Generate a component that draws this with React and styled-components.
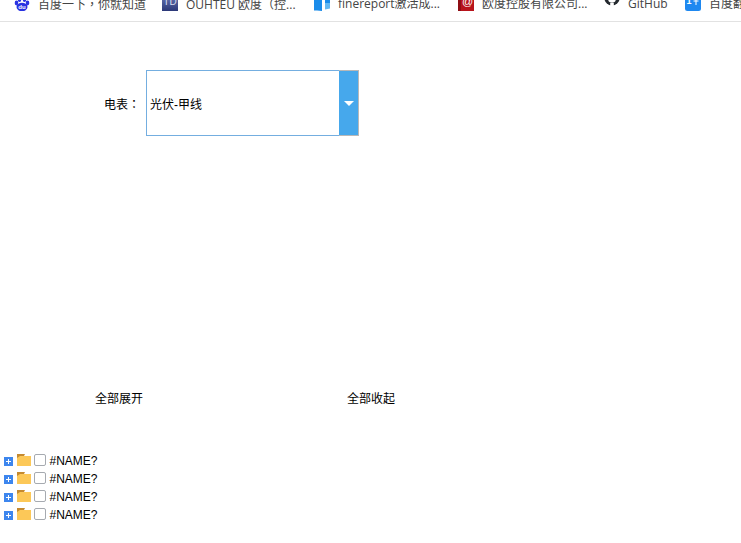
import React from "react";
import styled, { createGlobalStyle } from "styled-components";

const Global = createGlobalStyle`
  html, body { margin: 0; padding: 0; background: #fff; }
  body { width: 741px; height: 543px; overflow: hidden; font-family: "Liberation Sans", "Noto Sans CJK SC", sans-serif; color: #000; }
`;
const Page = styled.div`display: flex; flex-direction: column; width: 741px; height: 543px; overflow: hidden;`;
const BookmarkBar = styled.nav`
  display: flex; align-items: flex-end; flex: none; box-sizing: border-box;
  height: 22px; padding: 0 0 10px 14px; border-bottom: 1px solid #e2e2e2;
  overflow: hidden; white-space: nowrap;
`;
const Bookmark = styled.div`
  display: flex; align-items: center; flex: none; width: ${p => p.$w}px; height: 16px; gap: 8px;
`;
const BookmarkText = styled.span`
  margin-top: 2px; font-size: 12px; line-height: 16px; color: #444;
  font-family: "Open Sans", "Noto Sans CJK SC", sans-serif;
`;
const Fav = styled.svg`flex: none; width: 16px; height: 16px;`;
const Punct = styled.span`font-family: "Noto Sans CJK TC", sans-serif;`;
const Form = styled.div`
  display: flex; align-items: center; flex: none; margin: 48px 0 0 104px; height: 66px;
`;
const Label = styled.span`font-size: 12px; width: 42px; flex: none;`;
const Select = styled.div`display: flex; width: 213px; height: 66px;`;
const Value = styled.div`
  flex: 1; box-sizing: border-box; display: flex; align-items: center; padding-left: 3px; font-size: 12px;
  border: 1px solid #74aee0; border-right: 0;
`;
const Arrow = styled.div`
  box-sizing: border-box; flex: none; width: 20px; background: #46a8ec; display: flex; align-items: center; justify-content: center;
  border: 1px solid #b8b8b8; border-left: 0;
  &::after { content: ""; border-left: 5px solid transparent; border-right: 5px solid transparent; border-top: 5px solid #fff; }
`;
const Actions = styled.div`
  display: flex; flex: none; margin: 255px 0 0 95px; font-size: 12px; line-height: 16px;
`;
const Action = styled.span`width: 252px; flex: none;`;
const Tree = styled.ul`
  list-style: none; margin: 45px 0 0 4px; padding: 0; display: flex; flex-direction: column;
`;
const Row = styled.li`
  display: flex; align-items: flex-start; height: 18px; line-height: 18px; font-size: 12px;
`;
const Plus = styled.span`
  position: relative; width: 9px; height: 9px; margin-top: 5px; background: #3d86ee; flex: none;
  &::before { content: ""; position: absolute; left: 2px; top: 4px; width: 5px; height: 1px; background: #fff; }
  &::after { content: ""; position: absolute; left: 4px; top: 2px; width: 1px; height: 5px; background: #fff; }
`;
const Folder = styled.svg`flex: none; width: 14px; height: 12px; margin: 2px 0 0 4px;`;
const Check = styled.span`
  box-sizing: border-box; flex: none; width: 12px; height: 12px; margin: 2px 3px 0 3px;
  background: #fff; border: 1px solid #a6aab0; border-radius: 2px;
`;
const NodeName = styled.span`margin-left: 0.5px;`;
const IconLabel = styled.text`
  font-family: "Liberation Sans", sans-serif; font-weight: ${p => p.$bold ? 700 : 400};
`;

const favs = [
  { w: 148, label: <>百度一下<Punct>，</Punct>你就知道</>, icon: (
    <>
      <ellipse cx="8" cy="12" rx="5.5" ry="4.2" fill="#2932e1" />
      <ellipse cx="2.5" cy="8" rx="1.8" ry="2.4" fill="#2932e1" />
      <ellipse cx="13.5" cy="8" rx="1.8" ry="2.4" fill="#2932e1" />
      <ellipse cx="5.5" cy="4.5" rx="1.8" ry="2.4" fill="#2932e1" />
      <ellipse cx="10.5" cy="4.5" rx="1.8" ry="2.4" fill="#2932e1" />
      <IconLabel x="8" y="14" fontSize="6" textAnchor="middle" fill="#fff" $bold>du</IconLabel>
    </>
  ) },
  { w: 152, label: <>OUHTEU 欧度<Punct>（</Punct>控...</>, icon: (
    <>
      <defs>
        <linearGradient id="td" x1="0" y1="0" x2="0" y2="1">
          <stop offset="0" stopColor="#6a78b4" />
          <stop offset="1" stopColor="#2b3878" />
        </linearGradient>
      </defs>
      <rect x="0" y="0" width="16" height="16" fill="url(#td)" />
      <IconLabel x="8" y="10" fontSize="10" textAnchor="middle" fill="#d8def0">TD</IconLabel>
    </>
  ) },
  { w: 144, label: "finereport激活成...", icon: (
    <>
      <path d="M0 0h16v8H11V8H8V16L3 15.5H0z" fill="#1a8cea" />
      <path d="M8 8h3v8H8z" fill="#fff" />
      <path d="M11 8h5v5.5l-5 1z" fill="#63b8f2" />
      <path d="M8 5h3v3H8z" fill="#fff" />
    </>
  ) },
  { w: 146, label: "欧度控股有限公司...", icon: (
    <>
      <rect x="0" y="0" width="16" height="16" fill="#b8141c" />
      <rect x="0" y="0" width="3" height="16" fill="#8e0e14" />
      <IconLabel x="9.5" y="10" fontSize="11" textAnchor="middle" fill="#fff">@</IconLabel>
    </>
  ) },
  { w: 81, label: "GitHub", icon: (
    <>
      <circle cx="8" cy="3" r="7.6" fill="#24292e" />
      <path d="M4.2 -2h7.6V4a3.8 3.8 0 0 1-7.6 0z" fill="#fff" />
      <path d="M6.2 8h3.6v3H6.2z" fill="#fff" />
    </>
  ) },
  { w: 80, label: "百度翻译", icon: (
    <>
      <rect x="0" y="0" width="16" height="16" rx="2.5" fill="#1e88f0" />
      <IconLabel x="4" y="9" fontSize="9" textAnchor="middle" fill="#fff" $bold>1</IconLabel>
      <path d="M8 3h6M11 1v9M8.5 6h5" stroke="#fff" strokeWidth="1" fill="none" />
    </>
  ) },
];

export default function App() {
  return (
    <Page>
      <Global />
      <BookmarkBar>
        {favs.map((f, i) => (
          <Bookmark key={i} $w={f.w}>
            <Fav viewBox="0 0 16 16">{f.icon}</Fav>
            <BookmarkText>{f.label}</BookmarkText>
          </Bookmark>
        ))}
      </BookmarkBar>
      <Form>
        <Label>电表<Punct>：</Punct></Label>
        <Select>
          <Value>光伏-甲线</Value>
          <Arrow />
        </Select>
      </Form>
      <Actions>
        <Action>全部展开</Action>
        <Action>全部收起</Action>
      </Actions>
      <Tree>
        {[0, 1, 2, 3].map(i => (
          <Row key={i}>
            <Plus />
            <Folder viewBox="0 0 14 12">
              <path d="M0 2h14v10H0z" fill="#fcc858" />
              <path d="M0 0h8L7 2H3L0 4z" fill="#c58a30" />
            </Folder>
            <Check />
            <NodeName>#NAME?</NodeName>
          </Row>
        ))}
      </Tree>
    </Page>
  );
}
